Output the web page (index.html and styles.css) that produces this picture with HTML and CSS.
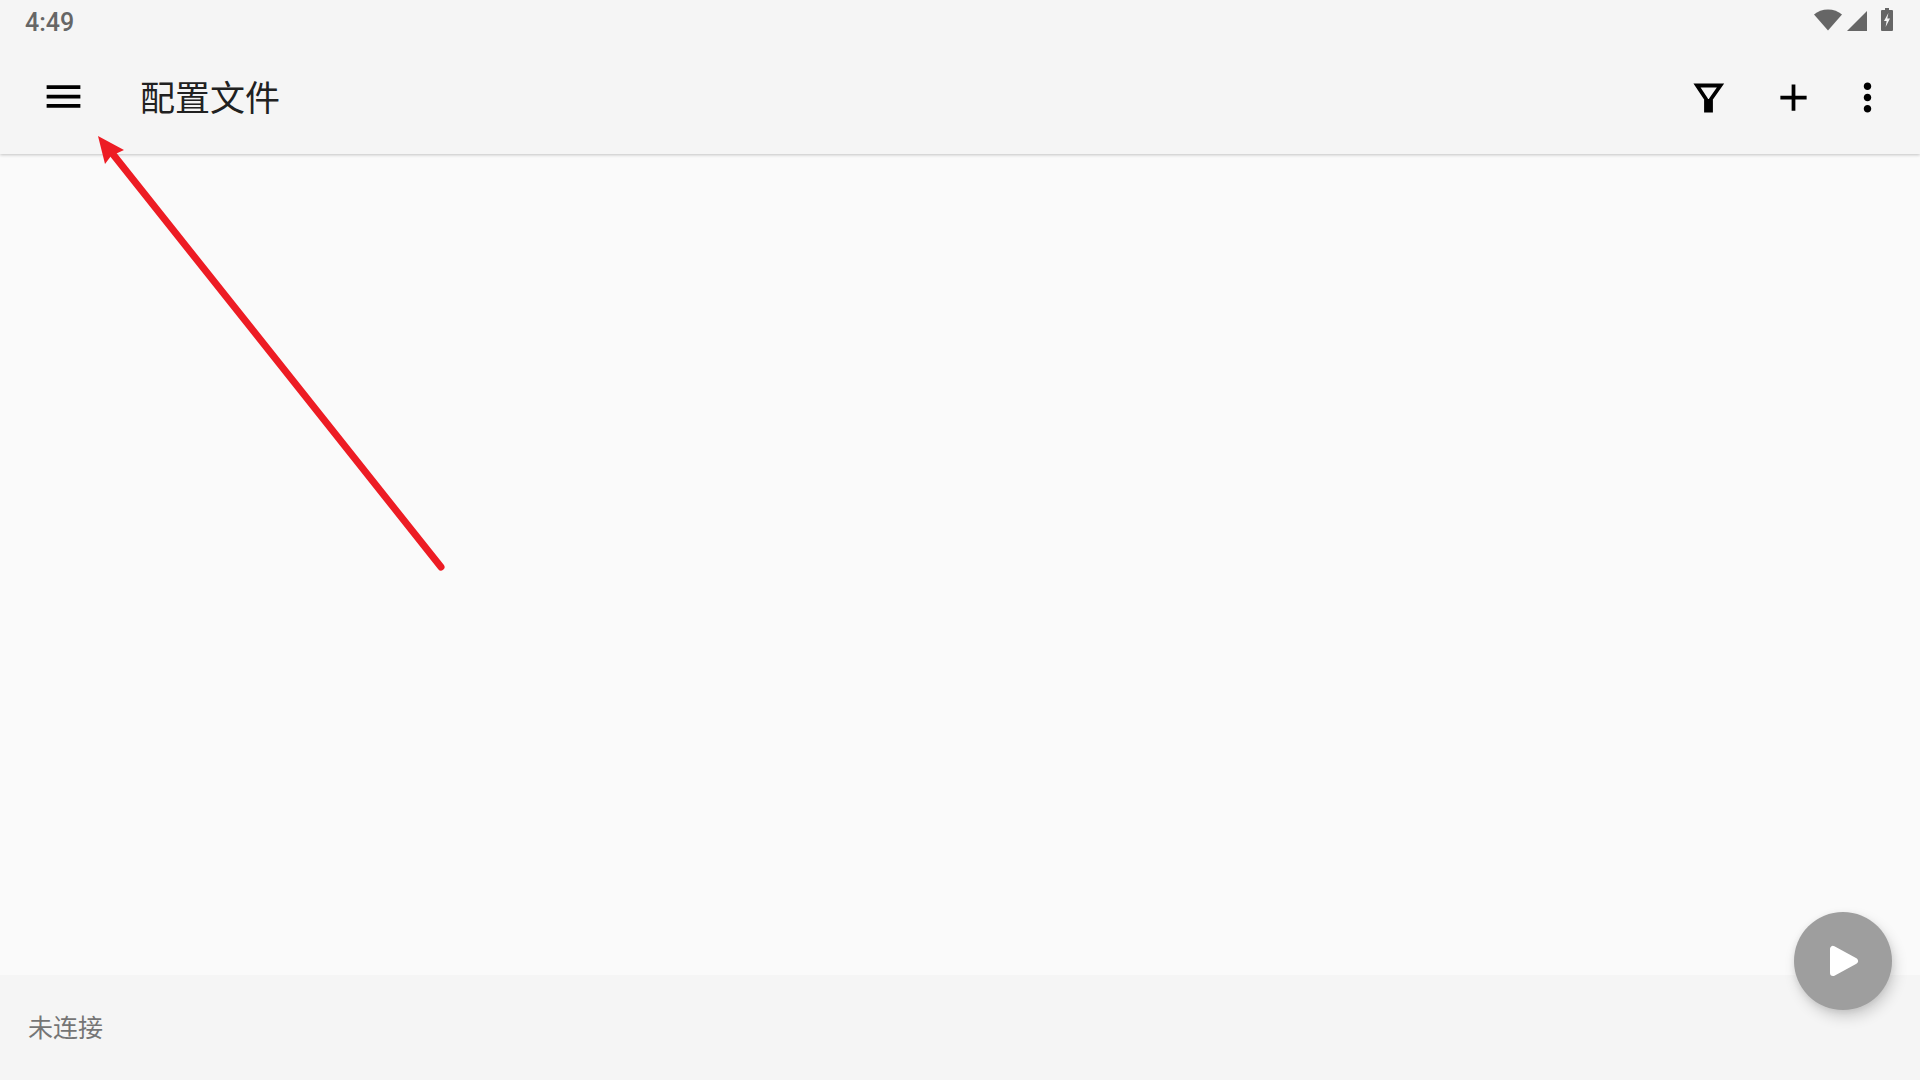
FILE: index.html
```html
<!DOCTYPE html>
<html lang="zh-CN">
<head>
<meta charset="utf-8">
<title>配置文件</title>
<link rel="stylesheet" href="styles.css">
</head>
<body>
<div class="app">
  <header class="appbar">
    <div class="status">
      <span class="time">4:49</span>
      <div class="status-icons">
        <svg class="ic-wifi" width="28" height="22" viewBox="0 0 28 22"><path d="M0 5.500C3.600 2.400 8.600 0.500 14 0.500s10.400 1.900 14 5L14 21.500z" fill="#666"/></svg>
        <svg class="ic-signal" width="20" height="20" viewBox="0 0 20 20"><path d="M0 20L20 0v20z" fill="#666"/></svg>
        <svg class="ic-battery" width="12" height="23" viewBox="0 0 12 23"><path d="M4 0h4v2h3a1 1 0 0 1 1 1v19a1 1 0 0 1-1 1H1a1 1 0 0 1-1-1V3a1 1 0 0 1 1-1h3z" fill="#666"/><path d="M7.400 5L3 13h2.600l-1 6L9 10.500H6.300z" fill="#f5f5f5"/></svg>
      </div>
    </div>
    <div class="toolbar">
      <svg class="icon menu" width="45" height="45" viewBox="0 0 24 24"><path d="M3 18h18v-2H3v2zm0-5h18v-2H3v2zm0-7v2h18V6H3z"/></svg>
      <h1 class="title">配置文件</h1>
      <div class="actions">
        <svg class="icon" width="45" height="45" viewBox="0 0 45 45"><path d="M11 10.500h23.500L25 24v11.500h-5V24z" fill="none" stroke="#000" stroke-width="3.800" stroke-linejoin="miter"/><path d="M20.500 24h4v12.500h-4z"/></svg>
        <svg class="icon plus" width="45" height="45" viewBox="0 0 24 24"><path d="M19 13h-6v6h-2v-6H5v-2h6V5h2v6h6v2z"/></svg>
        <svg class="icon more" width="45" height="45" viewBox="0 0 24 24"><path d="M12 8c1.100 0 2-.9 2-2s-.9-2-2-2-2 .9-2 2 .9 2 2 2zm0 2c-1.100 0-2 .9-2 2s.9 2 2 2 2-.9 2-2-.9-2-2-2zm0 6c-1.100 0-2 .9-2 2s.9 2 2 2 2-.9 2-2-.9-2-2-2z"/></svg>
      </div>
    </div>
  </header>
  <main class="content"></main>
  <footer class="footer"><span class="conn">未连接</span></footer>
  <button class="fab" type="button" aria-label="启动">
    <svg width="30" height="34" viewBox="0 0 30 34"><path d="M4 5v24l22-12z" fill="#fff" stroke="#fff" stroke-width="6" stroke-linejoin="round"/></svg>
  </button>
  <svg class="arrow" width="1920" height="1080" viewBox="0 0 1920 1080">
    <path d="M441 567L108 148" stroke="#ed1c24" stroke-width="7" stroke-linecap="round" fill="none"/>
    <path d="M98 136L124 150 111 156 105 164z" fill="#ed1c24"/>
  </svg>
</div>
</body>
</html>
```
FILE: styles.css
```css
* { box-sizing: border-box; }
html, body { margin: 0; height: 100%; }
body { font-family: "Roboto", "Noto Sans CJK SC", sans-serif; background: #fafafa; overflow: hidden; }
.app { position: relative; display: flex; flex-direction: column; height: 1080px; width: 1920px; }
.appbar { flex: none; height: 154px; background: #f5f5f5; box-shadow: 0 1px 3px rgba(0,0,0,.22); position: relative; display: flex; flex-direction: column; }
.status { flex: none; height: 41px; display: flex; justify-content: space-between; align-items: flex-start; padding: 0 27px 0 25px; }
.time { font-size: 25px; font-weight: 500; line-height: 28px; margin-top: 9px; color: #666; }
.status-icons { display: flex; padding-top: 8px; align-items: flex-start; }
.ic-wifi { margin-top: 1px; }
.ic-signal { margin: 3px 0 0 5px; }
.ic-battery { margin-left: 14px; }
.toolbar { flex: 1; display: flex; align-items: center; padding: 0 30px 0 41px; }
.icon { flex: none; display: block; }
.menu { margin-top: -3px; }
.title { margin: -4px 0 0 54px; font-family: "Noto Sans CJK SC", sans-serif; font-size: 35px; font-weight: 400; color: #212121; line-height: 45px; }
.actions { margin-left: auto; display: flex; align-items: center; }
.plus { margin-left: 40px; }
.more { margin-left: 29px; }
.content { flex: 1; background: #fafafa; }
.footer { flex: none; height: 105px; background: #f5f5f5; display: flex; align-items: center; padding-left: 28px; }
.conn { font-family: "Noto Sans CJK SC", sans-serif; font-size: 25px; color: #757575; line-height: 32px; margin-top: -4px; }
.fab { position: absolute; left: 1794px; top: 912px; width: 98px; height: 98px; padding: 0; border: 0; border-radius: 50%; background: #9e9e9e; box-shadow: 3px 7px 14px rgba(0,0,0,.16), 0 2px 6px rgba(0,0,0,.08); display: flex; align-items: center; justify-content: center; }
.fab svg { display: block; margin-left: 1px; }
.arrow { position: absolute; left: 0; top: 0; pointer-events: none; }
```
